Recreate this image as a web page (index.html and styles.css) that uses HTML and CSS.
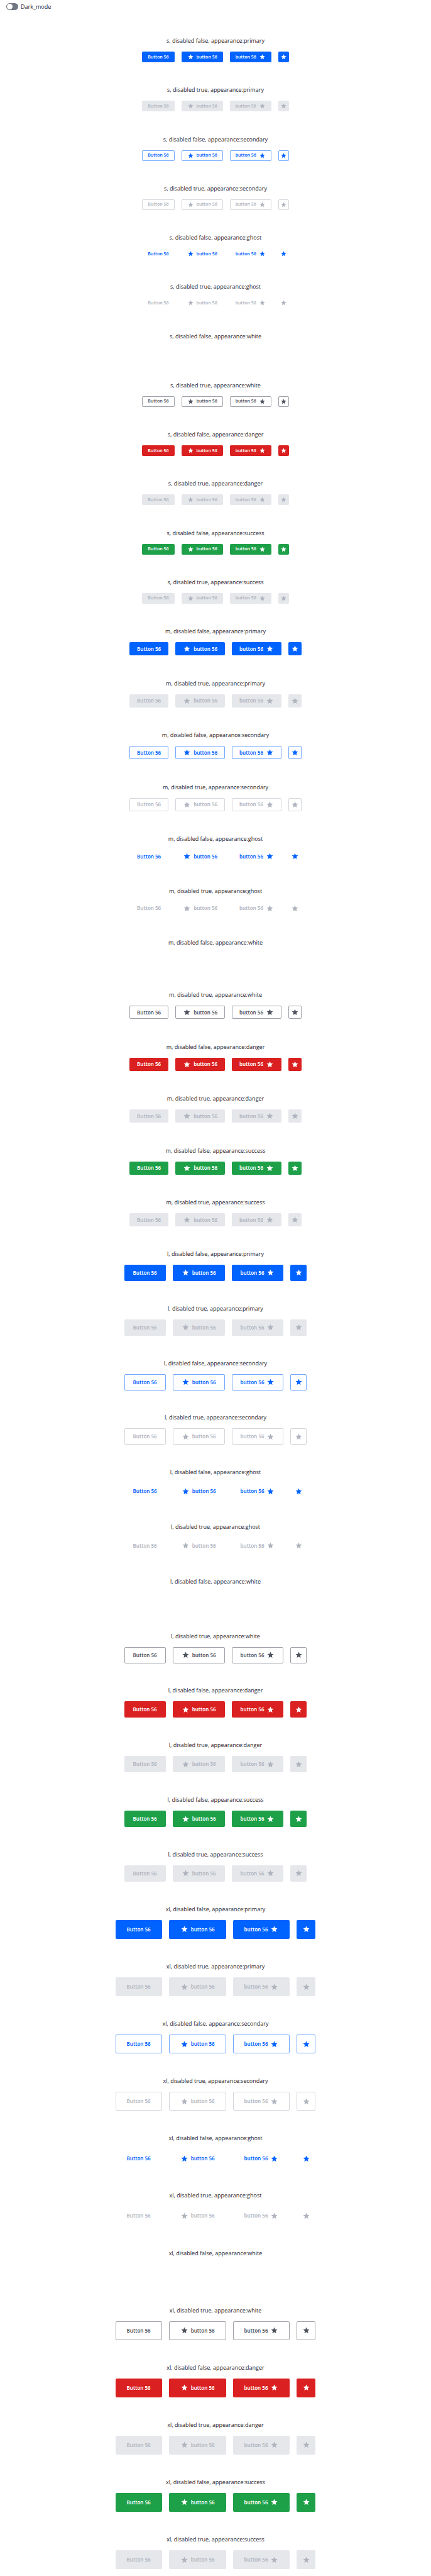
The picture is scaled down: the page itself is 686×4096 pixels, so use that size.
FILE: index.html
```html
<!DOCTYPE html>
<html lang="en">
<head>
  <meta charset="utf-8">
  <meta name="viewport" content="width=device-width, initial-scale=1">
  <title>Buttons</title>
  <link rel="stylesheet" href="styles.css">
</head>
<body class="page">
  <svg class="sprite" aria-hidden="true">
    <symbol id="star" viewBox="-1 -1 26 26">
      <path d="M12 17.27 18.18 21l-1.64-7.03L22 9.24l-7.19-.61L12 2 9.19 8.63 2 9.24l5.46 4.73L5.82 21z"/>
    </symbol>
  </svg>
  <header class="toolbar">
    <input class="switch" type="checkbox" role="switch" id="dark-mode">
    <label class="switch-label" for="dark-mode">Dark_mode</label>
  </header>
  <main class="gallery" id="gallery"></main>
  <script src="script.js"></script>
</body>
</html>
```
FILE: styles.css
```css
*,
*::before {
  box-sizing: border-box;
}

.page {
  display: flex;
  flex-direction: column;
  min-height: 100vh;
  margin: 0;
  background: #fff;
  color: #1f222b;
  font-family: "Open Sans", "Noto Sans", sans-serif;
  font-size: 9px;
  line-height: 12px;
}

.sprite {
  display: none;
}

.toolbar {
  display: flex;
  align-items: center;
  gap: 4px;
  height: 32px;
  padding: 0 10px 11px;
}

.switch {
  appearance: none;
  flex: none;
  width: 19px;
  height: 11px;
  margin: 0;
  padding: 1px;
  border-radius: 6px;
  background: #717682;
}

.switch::before {
  content: "";
  display: block;
  width: 9px;
  height: 9px;
  border-radius: 50%;
  background: #fff;
}

.switch:checked {
  background: #0062ff;
}

.switch:checked::before {
  margin-left: auto;
}

.gallery {
  display: grid;
  flex: 1;
  grid-template-rows: 146fr 154fr 162fr 170fr;
}

.group {
  display: grid;
  grid-auto-rows: 1fr;
}

.example {
  display: flex;
  flex-direction: column;
  justify-content: flex-end;
  align-items: center;
  gap: 11px;
  padding-bottom: 11px;
}

.title {
  margin: 0;
  font-size: 9px;
  font-weight: 400;
}

.buttons {
  display: flex;
  gap: 11px;
  height: var(--size);
}

.s {
  --size: 17px;
  --pad: 9px;
  --icon: 11px;
  --text: 7px;
}

.m {
  --size: 21px;
  --pad: 12px;
  --icon: 13px;
  --text: 8px;
}

.l {
  --size: 26px;
  --pad: 14px;
  --icon: 13px;
  --text: 8px;
}

.xl {
  --size: 30px;
  --pad: 18px;
  --icon: 13px;
  --text: 8px;
}

.button {
  display: inline-flex;
  align-items: center;
  justify-content: center;
  gap: 4px;
  height: var(--size);
  padding: 0 calc(var(--pad) - 1px);
  border: 1px solid transparent;
  border-radius: 2px;
  background: none;
  font-family: "Noto Sans", "Open Sans", sans-serif;
  font-size: var(--text);
  font-weight: 600;
  line-height: 12px;
  white-space: nowrap;
}

.icon-only {
  width: var(--size);
  padding: 0;
}

.icon {
  flex: none;
  width: var(--icon);
  height: var(--icon);
  fill: currentColor;
}

.primary {
  background: #0062ff;
  color: #fff;
}

.secondary {
  border-color: #73a9ff;
  color: #0062ff;
}

.ghost {
  color: #0062ff;
}

.danger {
  background: #da2020;
  color: #fff;
}

.success {
  background: #1ea049;
  color: #fff;
}

.button:disabled {
  background: #e5e7eb;
  color: #afb4be;
}

.secondary:disabled {
  border-color: #d3d6db;
  background: none;
}

.ghost:disabled {
  background: none;
}

.white:disabled {
  border-color: #9fa2a9;
  background: #fff;
  color: #4e525d;
}
```
FILE: script.js
```js
const sizes = ['s', 'm', 'l', 'xl'];
const appearances = ['primary', 'secondary', 'ghost', 'white', 'danger', 'success'];

const icon = '<svg class="icon" aria-hidden="true"><use href="#star"/></svg>';

function buttons(appearance, disabled) {
  const attrs = disabled ? ' disabled' : '';
  const open = `<button type="button" class="button ${appearance}"${attrs}>`;
  return `
    ${open}Button 56</button>
    ${open}${icon}<span>button 56</span></button>
    ${open}<span>button 56</span>${icon}</button>
    <button type="button" class="button icon-only ${appearance}" aria-label="Star"${attrs}>${icon}</button>`;
}

function example(size, appearance, disabled) {
  const hidden = appearance === 'white' && !disabled;
  return `
    <article class="example">
      <h2 class="title">${size}, disabled ${disabled}, appearance:${appearance}</h2>
      <div class="buttons">${hidden ? '' : buttons(appearance, disabled)}</div>
    </article>`;
}

document.getElementById('gallery').innerHTML = sizes.map((size) => `
  <section class="group ${size}">
    ${appearances.map((a) => example(size, a, false) + example(size, a, true)).join('')}
  </section>`).join('');
```
